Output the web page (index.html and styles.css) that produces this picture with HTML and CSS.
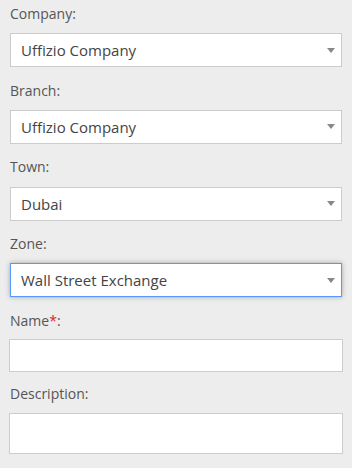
FILE: index.html
```html
<!DOCTYPE html>
<html lang="en">
<head>
<meta charset="UTF-8">
<meta name="viewport" content="width=device-width, initial-scale=1.0">
<title>Zone Form</title>
<link rel="stylesheet" href="styles.css">
</head>
<body>

<form class="zone-form">
    <div class="field">
        <label>Company:</label>
        <div class="select-box">
            <span class="select-text">Uffizio Company</span>
            <span class="arrow"></span>
        </div>
    </div>
    <div class="field">
        <label>Branch:</label>
        <div class="select-box">
            <span class="select-text">Uffizio Company</span>
            <span class="arrow"></span>
        </div>
    </div>
    <div class="field">
        <label>Town:</label>
        <div class="select-box">
            <span class="select-text">Dubai</span>
            <span class="arrow"></span>
        </div>
    </div>
    <div class="field">
        <label>Zone:</label>
        <div class="select-box focused">
            <span class="select-text">Wall Street Exchange</span>
            <span class="arrow"></span>
        </div>
    </div>
    <div class="field input-field">
        <label>Name<span class="required">*</span>:</label>
        <input type="text" class="text-input">
    </div>
    <div class="field input-field">
        <label>Description:</label>
        <textarea class="text-area"></textarea>
    </div>
</form>

</body>
</html>
```

FILE: styles.css
```css
body {
    margin: 0;
    background-color: #ededed;
    font-family: "Open Sans", sans-serif;
}
.zone-form {
    padding: 4px 10px 0 10px;
}
.field {
    margin-bottom: 13.33px;
}
.input-field {
    margin-bottom: 12px;
}
label {
    display: block;
    font-size: 14px;
    line-height: 20px;
    color: #555555;
    margin-bottom: 9.33px;
}
.input-field label {
    margin-bottom: 8.33px;
}
.required {
    color: #e02020;
}
.select-box {
    display: flex;
    align-items: center;
    justify-content: space-between;
    height: 32px;
    padding: 0 6px 0 10px;
    background-color: #ffffff;
    border: 1px solid #cccccc;
}
.select-box.focused {
    border-color: #5897fb;
    box-shadow: 0 0 5px rgba(0, 0, 0, 0.3);
}
.select-text {
    font-size: 15px;
    color: #444444;
}
.arrow {
    width: 0;
    height: 0;
    border-style: solid;
    border-width: 5px 4px 0 4px;
    border-color: #888888 transparent transparent transparent;
}
.text-input,
.text-area {
    display: block;
    box-sizing: border-box;
    width: calc(100% + 2px);
    margin-left: -1px;
    height: 33.33px;
    border: 1px solid #cccccc;
    background-color: #ffffff;
    font-family: "Open Sans", sans-serif;
    font-size: 15px;
    padding: 6px 10px;
    outline: none;
}
.text-area {
    height: 41.67px;
    resize: none;
}
```
